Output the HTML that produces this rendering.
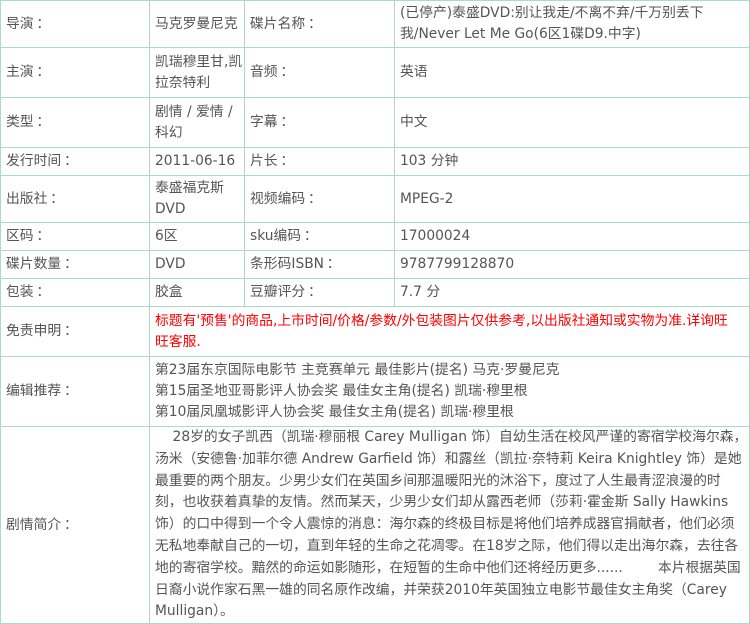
<!DOCTYPE html>
<html><head><meta charset="utf-8">
<style>
html,body{margin:0;padding:0;background:#fff;}
body{width:750px;height:624px;overflow:hidden;font-family:"DejaVu Sans","Noto Sans CJK SC",sans-serif;font-size:13.8px;color:#555;}
table{border-collapse:collapse;position:absolute;left:0;top:0;width:749px;table-layout:fixed;}
td{border:1px solid #a9dcc3;padding:0 0 0 5px;line-height:21px;vertical-align:middle;overflow:hidden;white-space:nowrap;}
.red{color:#f00;}
.desc div{white-space:nowrap;line-height:21.8px;}
</style></head><body>
<table>
<colgroup><col style="width:149px"><col style="width:95px"><col style="width:150px"><col style="width:355px"></colgroup>
<tr style="height:47px"><td>导演&thinsp;：</td><td>马克罗曼尼克</td><td>碟片名称&thinsp;：</td><td>(已停产)泰盛DVD:别让我走/不离不弃/千万别丢下<br>我/Never Let Me Go(6区1碟D9.中字)</td></tr>
<tr style="height:50px"><td>主演&thinsp;：</td><td>凯瑞穆里甘,凯<br>拉奈特利</td><td>音频&thinsp;：</td><td>英语</td></tr>
<tr style="height:50px"><td>类型&thinsp;：</td><td>剧情 / 爱情 /<br>科幻</td><td>字幕&thinsp;：</td><td>中文</td></tr>
<tr style="height:28px"><td>发行时间&thinsp;：</td><td>2011-06-16</td><td>片长&thinsp;：</td><td>103 分钟</td></tr>
<tr style="height:47px"><td>出版社&thinsp;：</td><td>泰盛福克斯<br>DVD</td><td>视频编码&thinsp;：</td><td>MPEG-2</td></tr>
<tr style="height:28px"><td>区码&thinsp;：</td><td>6区</td><td>sku编码&thinsp;：</td><td>17000024</td></tr>
<tr style="height:28px"><td>碟片数量&thinsp;：</td><td>DVD</td><td>条形码ISBN&thinsp;：</td><td>9787799128870</td></tr>
<tr style="height:28px"><td>包装&thinsp;：</td><td>胶盒</td><td>豆瓣评分&thinsp;：</td><td>7.7 分</td></tr>
<tr style="height:50px"><td>免责申明&thinsp;：</td><td colspan="3" class="red">标题有'预售'的商品,上市时间/价格/参数/外包装图片仅供参考,以出版社通知或实物为准.详询旺<br>旺客服.</td></tr>
<tr style="height:70px"><td>编辑推荐&thinsp;：</td><td colspan="3">第23届东京国际电影节 主竞赛单元 最佳影片(提名) 马克·罗曼尼克<br>第15届圣地亚哥影评人协会奖 最佳女主角(提名) 凯瑞·穆里根<br>第10届凤凰城影评人协会奖 最佳女主角(提名) 凯瑞·穆里根</td></tr>
<tr style="height:196px"><td>剧情简介&thinsp;：</td><td colspan="3" class="desc">
<div>&nbsp;&nbsp;&nbsp;&nbsp;28岁的女子凯西（凯瑞·穆丽根 Carey Mulligan 饰）自幼生活在校风严谨的寄宿学校海尔森，</div>
<div>汤米（安德鲁·加菲尔德 Andrew Garfield 饰）和露丝（凯拉·奈特莉 Keira Knightley 饰）是她</div>
<div>最重要的两个朋友。少男少女们在英国乡间那温暖阳光的沐浴下，度过了人生最青涩浪漫的时</div>
<div>刻，也收获着真挚的友情。然而某天，少男少女们却从露西老师（莎莉·霍金斯 Sally Hawkins</div>
<div>饰）的口中得到一个令人震惊的消息：海尔森的终极目标是将他们培养成器官捐献者，他们必须</div>
<div>无私地奉献自己的一切，直到年轻的生命之花凋零。在18岁之际，他们得以走出海尔森，去往各</div>
<div>地的寄宿学校。黯然的命运如影随形，在短暂的生命中他们还将经历更多......&nbsp;&nbsp;&nbsp;&nbsp;&nbsp;&nbsp;&nbsp;&nbsp;本片根据英国</div>
<div>日裔小说作家石黑一雄的同名原作改编，并荣获2010年英国独立电影节最佳女主角奖（Carey</div>
<div>Mulligan）。</div>
</td></tr>
</table>
</body></html>
